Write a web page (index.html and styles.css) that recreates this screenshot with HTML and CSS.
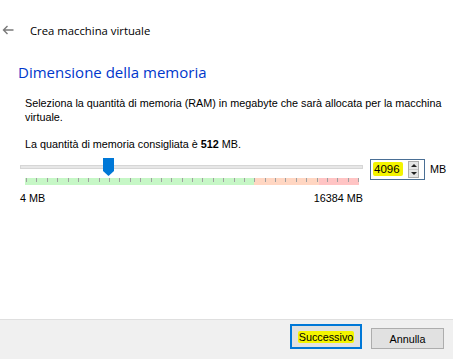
FILE: index.html
```html
<!DOCTYPE html>
<html lang="it">
<head>
<meta charset="utf-8">
<title>Crea macchina virtuale</title>
<link rel="stylesheet" href="styles.css">
</head>
<body>
<div class="window">
  <header class="titlebar">
    <svg class="back" width="12" height="10" viewBox="0 0 12 10" aria-hidden="true">
      <path d="M11.5 5H1.5M5.5 1L1.5 5L5.5 9" fill="none" stroke="#7a7a7a" stroke-width="1.4"/>
    </svg>
    <span class="title">Crea macchina virtuale</span>
  </header>
  <main class="content">
    <h1 class="heading">Dimensione della memoria</h1>
    <p class="desc">Seleziona la quantità di memoria (RAM) in megabyte che sarà allocata per la macchina virtuale.</p>
    <p class="rec">La quantità di memoria consigliata è <b>512</b> MB.</p>
    <div class="memrow">
      <div class="slider">
        <div class="track"></div>
        <div class="handle"></div>
        <div class="ticks"></div>
        <div class="labels"><span>4 MB</span><span>16384 MB</span></div>
      </div>
      <div class="spin">
        <span class="value"><span class="hl">4096</span></span>
        <span class="arrows">
          <span class="arrow up"></span>
          <span class="arrow down"></span>
        </span>
      </div>
      <span class="unit">MB</span>
    </div>
  </main>
  <footer class="footer">
    <button class="btn primary"><span class="hl">Successivo</span></button>
    <button class="btn">Annulla</button>
  </footer>
</div>
</body>
</html>
```
FILE: styles.css
```css
html, body {
  margin: 0;
  padding: 0;
  background: #ffffff;
}
.window {
  width: 453px;
  height: 359px;
  display: flex;
  flex-direction: column;
  font-family: "Liberation Sans", Arial, sans-serif;
  font-size: 10.8px;
  color: #000;
}
.titlebar {
  height: 44px;
  display: flex;
  align-items: center;
  padding: 16px 0 0 2px;
  box-sizing: border-box;
}
.back {
  display: block;
}
.title {
  margin-left: 16px;
  font-family: "Open Sans", "Noto Sans", sans-serif;
  font-size: 11.3px;
  color: #000;
}
.content {
  flex: 1;
}
.heading {
  margin: 18px 0 0 18px;
  font-family: "Open Sans", "Noto Sans", sans-serif;
  font-weight: normal;
  font-size: 15px;
  line-height: 20px;
  color: #0037cc;
}
.desc {
  margin: 14px 4px 0 25px;
  line-height: 14px;
}
.rec {
  margin: 13px 0 0 25px;
  line-height: 14px;
}
.rec b {
  font-weight: bold;
}
.memrow {
  display: flex;
  align-items: flex-start;
  margin: 7px 0 0 20px;
}
.slider {
  position: relative;
  width: 343px;
  padding-top: 7px;
}
.track {
  height: 2px;
  background: #e7e7e7;
  border: 1px solid #d6d6d6;
}
.handle {
  position: absolute;
  left: 83px;
  top: 0;
  width: 11px;
  height: 18px;
  background: #0078d7;
  clip-path: polygon(0 0, 100% 0, 100% 72%, 50% 100%, 0 72%);
}
.ticks {
  margin: 9px 4px 0 5px;
  height: 7px;
  background:
    repeating-linear-gradient(to right, #a0a0a0 0, #a0a0a0 1px, transparent 1px, transparent 10.375px) 1px 0 / 100% 4px no-repeat,
    linear-gradient(to right, #c6f7c6 0, #c6f7c6 229px, #ffd6c2 229px, #ffd6c2 294px, #ffc4c4 294px, #ffc4c4 100%);
}
.labels {
  display: flex;
  justify-content: space-between;
  margin-top: 7px;
  line-height: 13px;
}
.spin {
  display: flex;
  align-items: center;
  justify-content: space-between;
  box-sizing: border-box;
  width: 55px;
  height: 21px;
  margin-left: 7px;
  margin-top: 1px;
  border: 1px solid #4a6f95;
  padding: 0 5px 0 2px;
  background: #fff;
}
.value {
  font-size: 11.5px;
  line-height: 15px;
}
.hl {
  background: #f4f400;
  border-radius: 2px;
  padding: 0 1px;
}
.value .hl {
  padding: 1px 3px 1px 1px;
}
.arrows {
  display: flex;
  flex-direction: column;
  box-sizing: border-box;
  width: 11px;
  height: 17px;
  border: 1px solid #adadad;
  background: #e5e5e5;
}
.arrow {
  flex: 1;
  display: flex;
  align-items: center;
  justify-content: center;
}
.arrow::before {
  content: "";
  width: 0;
  height: 0;
  border-left: 3px solid transparent;
  border-right: 3px solid transparent;
}
.up::before {
  border-bottom: 3px solid #222;
}
.down::before {
  border-top: 3px solid #222;
}
.down {
  border-top: 1px solid #c8c8c8;
}
.unit {
  margin: 5px 0 0 5px;
  line-height: 13px;
}
.footer {
  height: 40px;
  box-sizing: border-box;
  border-top: 1px solid #dfdfdf;
  background: #f0f0f0;
  display: flex;
  justify-content: flex-end;
  align-items: flex-end;
  gap: 9px;
  padding: 0 9px 10px 0;
}
.btn {
  font-family: "Liberation Sans", Arial, sans-serif;
  font-size: 10.8px;
  color: #000;
  background: #e1e1e1;
  border: 1px solid #adadad;
  width: 73px;
  height: 21px;
  padding: 0;
  margin: 0;
}
.btn.primary {
  width: 72px;
  height: 25px;
  border: 2px solid #0078d7;
}
```
